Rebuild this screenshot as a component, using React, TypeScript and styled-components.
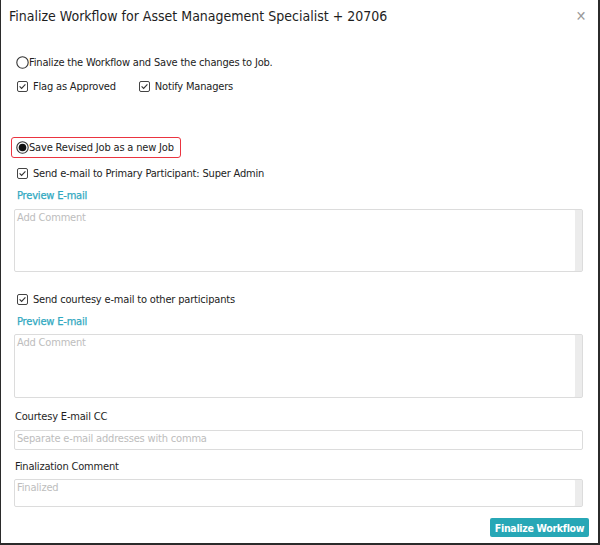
import React from "react";
import styled, { createGlobalStyle } from "styled-components";

const GlobalStyle = createGlobalStyle`
  html, body {
    margin: 0;
    padding: 0;
    background: #ffffff;
  }
  * {
    box-sizing: border-box;
  }
`;

const Modal = styled.div`
  width: 600px;
  height: 545px;
  background: #ffffff;
  border-left: 1px solid #2b2b2b;
  border-right: 2px solid #2b2b2b;
  border-bottom: 2px solid #2b2b2b;
  font-family: "DejaVu Sans Condensed", "DejaVu Sans", sans-serif;
  font-size: 11px;
  letter-spacing: -0.18px;
  color: #222222;
  display: flex;
  flex-direction: column;
`;

const Header = styled.div`
  height: 32px;
  display: flex;
  align-items: center;
  justify-content: space-between;
  padding: 0 12px 0 8px;
`;

const Title = styled.h1`
  margin: 0;
  font-size: 14px;
  font-weight: normal;
  letter-spacing: 0;
  color: #1e1e1e;
`;

const Close = styled.span`
  color: #9a9a9a;
  font-size: 14px;
  line-height: 1;
`;

const Body = styled.div`
  display: flex;
  flex-direction: column;
  padding: 0 15px 0 13px;
`;

const Row = styled.div<{ $top: number; $indent?: number; $gap?: number }>`
  display: flex;
  align-items: center;
  height: 16px;
  margin-top: ${(p) => p.$top}px;
  padding-left: ${(p) => p.$indent ?? 0}px;
  gap: ${(p) => p.$gap ?? 0}px;
`;

const CheckLabel = styled.label`
  display: flex;
  align-items: center;
  gap: 5px;
  white-space: nowrap;
`;

const Highlight = styled.div`
  display: flex;
  align-items: center;
  align-self: flex-start;
  height: 21px;
  margin-top: 43px;
  margin-left: -3px;
  padding: 0 6px 0 4px;
  border: 1.5px solid #ea3440;
  border-radius: 3px;
`;

const PreviewLink = styled.a`
  display: block;
  height: 16px;
  line-height: 16px;
  color: #31a9c1;
  text-decoration: none;
  padding-left: 3px;
  -webkit-text-stroke: 0.25px #31a9c1;
`;

const FieldLabel = styled.div<{ $top: number }>`
  height: 16px;
  line-height: 16px;
  margin-top: ${(p) => p.$top}px;
  padding-left: 1px;
  color: #1e1e1e;
`;

const Area = styled.div<{ $top: number; $height: number; $scroll?: boolean }>`
  margin-top: ${(p) => p.$top}px;
  height: ${(p) => p.$height}px;
  border: 1px solid #dcdcdc;
  border-radius: 2px;
  color: #bdbdbd;
  padding: 1px 2px;
  line-height: 14px;
  box-shadow: ${(p) => (p.$scroll ? "inset -7px 0 0 #ececec" : "none")};
`;

const ButtonRow = styled.div`
  display: flex;
  justify-content: flex-end;
  margin-top: 11px;
  margin-right: -6px;
`;

const Button = styled.button`
  height: 19px;
  width: 99px;
  padding: 0;
  border: none;
  border-radius: 2px;
  background: #27a7b6;
  color: #ffffff;
  font-family: inherit;
  font-size: 10.5px;
  font-weight: bold;
  letter-spacing: -0.3px;
  white-space: nowrap;
`;

function Radio({ checked }: { checked?: boolean }) {
  return (
    <svg width="13" height="13" viewBox="0 0 13 13">
      <circle cx="6.5" cy="6.5" r="5.7" fill="#fff" stroke="#333" strokeWidth="1.1" />
      {checked && <circle cx="6.5" cy="6.5" r="3.8" fill="#111" />}
    </svg>
  );
}

function Check() {
  return (
    <svg width="11" height="11" viewBox="0 0 11 11">
      <rect x="0.5" y="0.5" width="10" height="10" rx="1.5" fill="#fff" stroke="#444" />
      <path d="M2.6 5.4 L4.6 7.4 L8.4 3.3" fill="none" stroke="#333" strokeWidth="1.1" />
    </svg>
  );
}

export default function App() {
  return (
    <>
      <GlobalStyle />
      <Modal>
        <Header>
          <Title>Finalize Workflow for Asset Management Specialist + 20706</Title>
          <Close>✕</Close>
        </Header>
        <Body>
          <Row $top={22} $indent={2}>
            <Radio />
            <span>Finalize the Workflow and Save the changes to Job.</span>
          </Row>
          <Row $top={8} $indent={3} $gap={23}>
            <CheckLabel>
              <Check />
              Flag as Approved
            </CheckLabel>
            <CheckLabel>
              <Check />
              Notify Managers
            </CheckLabel>
          </Row>
          <Highlight>
            <Radio checked />
            <span>Save Revised Job as a new Job</span>
          </Highlight>
          <Row $top={7} $indent={3}>
            <CheckLabel>
              <Check />
              Send e-mail to Primary Participant: Super Admin
            </CheckLabel>
          </Row>
          <Row $top={7}>
            <PreviewLink>Preview E-mail</PreviewLink>
          </Row>
          <Area $top={5} $height={63} $scroll>
            Add Comment
          </Area>
          <Row $top={19} $indent={3}>
            <CheckLabel>
              <Check />
              Send courtesy e-mail to other participants
            </CheckLabel>
          </Row>
          <Row $top={7}>
            <PreviewLink>Preview E-mail</PreviewLink>
          </Row>
          <Area $top={4} $height={64} $scroll>
            Add Comment
          </Area>
          <FieldLabel $top={11}>Courtesy E-mail CC</FieldLabel>
          <Area $top={5} $height={20}>
            Separate e-mail addresses with comma
          </Area>
          <FieldLabel $top={9}>Finalization Comment</FieldLabel>
          <Area $top={4} $height={28} $scroll>
            Finalized
          </Area>
          <ButtonRow>
            <Button>Finalize Workflow</Button>
          </ButtonRow>
        </Body>
      </Modal>
    </>
  );
}
